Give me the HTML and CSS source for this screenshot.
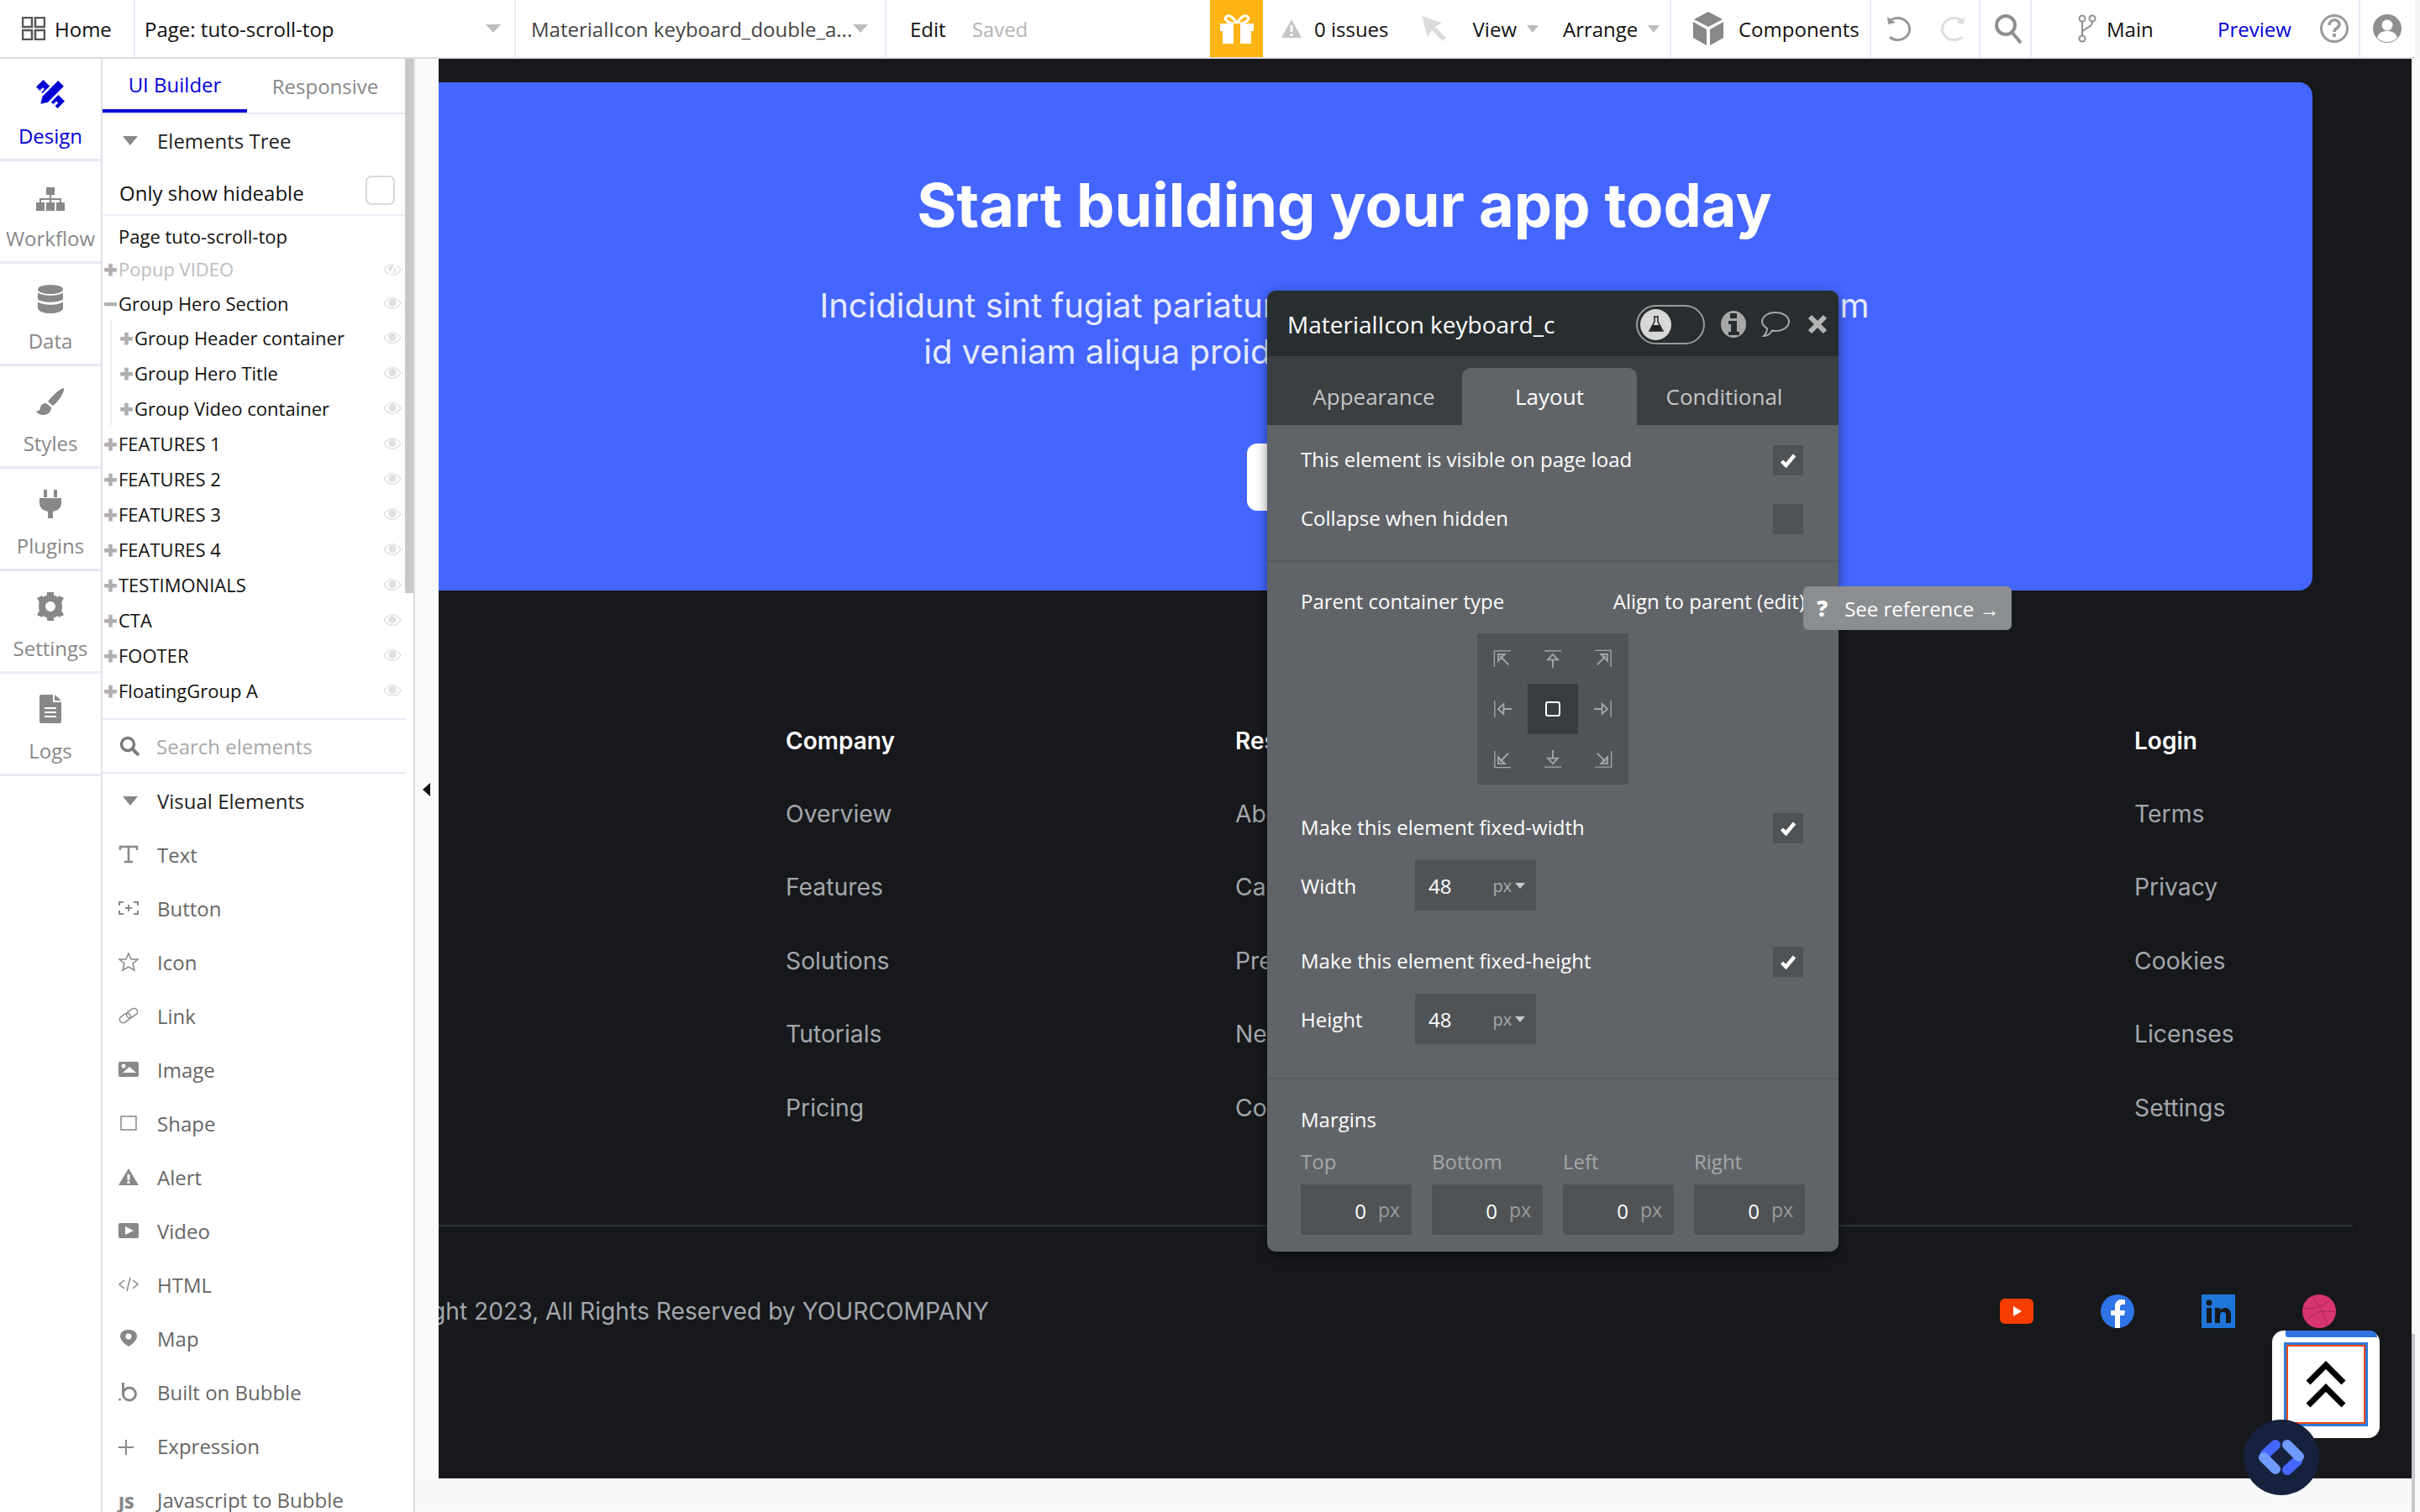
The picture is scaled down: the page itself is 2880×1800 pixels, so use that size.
FILE: index.html
```html
<!DOCTYPE html>
<html>
<head>
<meta charset="utf-8">
<title>tuto-scroll-top</title>
<link rel="stylesheet" href="styles.css">
</head>
<body>
<svg class="defs" width="0" height="0">
	<symbol id="eye" viewBox="0 0 24 16"><path d="M1 8C5 2.500 8.500 1 12 1s7 1.500 11 7c-4 5.500-7.500 7-11 7S5 13.500 1 8z" fill="none" stroke="currentColor" stroke-width="1.500"/><circle cx="12" cy="7.500" r="5" fill="currentColor"/></symbol>
	<symbol id="eye-off" viewBox="0 0 24 16"><path d="M1 8C5 2.500 8.500 1 12 1s7 1.500 11 7c-4 5.500-7.500 7-11 7S5 13.500 1 8z" fill="none" stroke="currentColor" stroke-width="1.500"/><circle cx="12" cy="7.500" r="5" fill="currentColor"/><path d="M8 16L17 0" stroke="#fff" stroke-width="3"/></symbol>
	<symbol id="corner" viewBox="0 0 24 24"><path d="M1.500 23V2H23" fill="none" stroke="currentColor" stroke-width="1.500"/><path d="M20 20L9 9" fill="none" stroke="currentColor" stroke-width="2"/><path d="M6.500 15V6.500H15z" fill="none" stroke="currentColor" stroke-width="2"/></symbol>
	<symbol id="edge" viewBox="0 0 24 24"><path d="M1 2H23" fill="none" stroke="currentColor" stroke-width="1.500"/><path d="M12 24V13M5.500 13.500L12 6.500l6.500 7z" fill="none" stroke="currentColor" stroke-width="2"/></symbol>
	<symbol id="check" viewBox="0 0 20 18"><path d="M2.500 10l5 5L17.500 3" fill="none" stroke="currentColor" stroke-width="4.500"/></symbol>
</svg>
<div class="app">
	<div class="topbar">
		<div class="seg seg-home">
			<svg class="ico-grid" viewBox="0 0 28 28"><path d="M1 1h11v11H1zM16 1h11v11H16zM1 16h11v11H1zM16 16h11v11H16z" fill="none" stroke="#555" stroke-width="2.500"/></svg>
			<span>Home</span>
		</div>
		<div class="seg seg-page"><span>Page: tuto-scroll-top</span><i class="caret"></i></div>
		<div class="seg seg-elem"><span>MaterialIcon keyboard_double_a...</span><i class="caret"></i></div>
		<div class="seg seg-edit"><span>Edit</span><span class="saved">Saved</span></div>
		<div class="gift">
			<svg viewBox="0 0 42 38" width="42" height="38"><path d="M21 13C17 5 11 2 8 5c-2 3 1 8 13 8zm0 0c4-8 10-11 13-8 2 3-1 8-13 8z" fill="none" stroke="#fff" stroke-width="3"/><path d="M1 13h40v9h-3v15H4V22H1z" fill="#fff"/><path d="M17 13h8v24h-8z" fill="#fdb515"/></svg>
		</div>
		<div class="seg seg-tools">
			<svg class="ico-warn" viewBox="0 0 26 24"><path d="M13 1l12 22H1z" fill="#c6c6c6"/><path d="M11.500 8h3v8h-3zM11.500 18h3v3h-3z" fill="#fff"/></svg>
			<span class="issues">0 issues</span>
			<svg class="ico-cursor" viewBox="0 0 30 30"><path d="M0 0l24 8-8 5 13 13-4 4-13-13-5 8z" fill="#dcdcdc"/></svg>
			<span class="view">View</span><i class="caret small"></i>
			<span class="arrange">Arrange</span><i class="caret small"></i>
		</div>
		<div class="seg seg-comp">
			<svg class="ico-cube" viewBox="0 0 36 40"><path d="M18 0l17 9-17 9L1 9z" fill="#888"/><path d="M0 12l16 9v19L0 31zM36 12l-16 9v19l16-9z" fill="#888"/></svg>
			<span>Components</span>
		</div>
		<div class="seg seg-undo">
			<svg viewBox="0 0 32 32" width="32" height="32"><path d="M5 8a14 13 0 1 1 1 18" fill="none" stroke="#9a9a9a" stroke-width="3"/><path d="M3 2l1 9 9-2z" fill="#9a9a9a"/></svg>
			<svg viewBox="0 0 32 32" width="32" height="32"><path d="M27 8a14 13 0 1 0-1 18" fill="none" stroke="#dedede" stroke-width="3"/><path d="M29 2l-1 9-9-2z" fill="#dedede"/></svg>
		</div>
		<div class="seg seg-find">
			<svg viewBox="0 0 34 36" width="34" height="36"><circle cx="14" cy="14" r="11" fill="none" stroke="#8f8f8f" stroke-width="4"/><path d="M21 22l11 13" stroke="#8f8f8f" stroke-width="4"/></svg>
		</div>
		<div class="seg seg-branch">
			<svg viewBox="0 0 22 34" width="22" height="34"><circle cx="5" cy="5" r="3.500" fill="none" stroke="#8f8f8f" stroke-width="2"/><circle cx="17" cy="5" r="3.500" fill="none" stroke="#8f8f8f" stroke-width="2"/><circle cx="5" cy="29" r="3.500" fill="none" stroke="#8f8f8f" stroke-width="2"/><path d="M5 9v16M17 9c0 8-12 7-12 13" fill="none" stroke="#8f8f8f" stroke-width="2"/></svg>
			<span>Main</span>
		</div>
		<div class="seg seg-preview">
			<span class="preview">Preview</span>
			<svg viewBox="0 0 34 34" width="34" height="34"><circle cx="17" cy="17" r="15.500" fill="none" stroke="#9a9a9a" stroke-width="3"/><path d="M11 13c0-8 12-8 12-1 0 5-6 4-6 9" fill="none" stroke="#9a9a9a" stroke-width="3.500"/><path d="M15 23h4v4h-4z" fill="#9a9a9a"/></svg>
		</div>
		<div class="seg seg-user">
			<svg viewBox="0 0 34 34" width="34" height="34"><circle cx="17" cy="17" r="17" fill="#8f8f8f"/><circle cx="17" cy="13" r="6.500" fill="#fff"/><path d="M5 28c2-7 7-8 12-8s10 1 12 8c-3 3-8 5-12 5s-9-2-12-5z" fill="#fff"/></svg>
		</div>
	</div>

	<div class="main">
		<nav class="rail">
			<div class="rail-item active">
				<svg viewBox="0 0 34 34" width="34" height="34">
					<g transform="rotate(-45 17 17)"><path d="M11 -1h12v36H11z" fill="#0000d6"/><path d="M11 5h5v3h-5zM11 13h5v3h-5zM11 21h5v3h-5zM11 28h5v3h-5z" fill="#fff"/></g>
					<g transform="rotate(45 17 17)"><path d="M11 0a2 2 0 0 1 2-2h8a2 2 0 0 1 2 2v26l-6 10-6-10z" fill="#0000d6" stroke="#fff" stroke-width="2.500"/></g>
				</svg>
				<span>Design</span>
			</div>
			<div class="rail-item">
				<svg viewBox="0 0 34 28" width="34" height="28"><path d="M12 0h10v9h-10zM0 18h10v10H0zM12 18h10v10H12zM24 18h10v10H24z" fill="#888"/><path d="M17 9v9M5 18v-4h24v4" fill="none" stroke="#888" stroke-width="2"/></svg>
				<span>Workflow</span>
			</div>
			<div class="rail-item">
				<svg viewBox="0 0 30 34" width="30" height="34"><ellipse cx="15" cy="5.500" rx="15" ry="5.500" fill="#888"/><path d="M0 9c4 5 26 5 30 0v8c-4 5-26 5-30 0zM0 20c4 5 26 5 30 0v8c-2 8-28 8-30 0z" fill="#888"/></svg>
				<span>Data</span>
			</div>
			<div class="rail-item">
				<svg viewBox="0 0 34 34" width="34" height="34"><path d="M33 1c1 4-5 15-13 21l-6-5C20 9 29 1 33 1zM12 19l6 5c0 5-4 9-9 9-4 0-8-2-9-5 4 1 5-2 5-4 1-4 4-5 7-5z" fill="#888"/></svg>
				<span>Styles</span>
			</div>
			<div class="rail-item">
				<svg viewBox="0 0 26 34" width="26" height="34"><path d="M5 0h4v9H5zM17 0h4v9h-4zM0 10h26v6c0 6-5 9-10 10v8h-6v-8C5 25 0 22 0 16z" fill="#888"/></svg>
				<span>Plugins</span>
			</div>
			<div class="rail-item">
				<svg viewBox="0 0 34 34" width="34" height="34"><circle cx="17" cy="17" r="10" fill="none" stroke="#888" stroke-width="8"/><path d="M13 0h8v7h-8zM13 27h8v7h-8zM1 7l6-3 4 6-6 4zM33 7l-6-3-4 6 6 4zM1 27l6 3 4-6-6-4zM33 27l-6 3-4-6 6-4z" fill="#888"/></svg>
				<span>Settings</span>
			</div>
			<div class="rail-item">
				<svg viewBox="0 0 26 34" width="26" height="34"><path d="M0 2a2 2 0 0 1 2-2h14v9h10v23a2 2 0 0 1-2 2H2a2 2 0 0 1-2-2zM18 0l8 7h-8z" fill="#888"/><path d="M6 16h14M6 21h14M6 26h14" stroke="#fff" stroke-width="2"/></svg>
				<span>Logs</span>
			</div>
		</nav>

		<aside class="panel">
			<div class="tabs">
				<div class="tab on">UI Builder</div>
				<div class="tab">Responsive</div>
			</div>
			<div class="tree-head"><i class="caret"></i><span>Elements Tree</span></div>
			<div class="hideable"><span>Only show hideable</span><i class="box"></i></div>
			<div class="tree">
				<div class="node page">Page tuto-scroll-top</div>
				<div class="node dim short"><b>+</b><span>Popup VIDEO</span><svg class="eye"><use href="#eye-off"/></svg></div>
				<div class="node hero-node"><b>&minus;</b><span>Group Hero Section</span><svg class="eye"><use href="#eye"/></svg></div>
				<div class="node sub"><b>+</b><span>Group Header container</span><svg class="eye"><use href="#eye"/></svg></div>
				<div class="node sub"><b>+</b><span>Group Hero Title</span><svg class="eye"><use href="#eye"/></svg></div>
				<div class="node sub"><b>+</b><span>Group Video container</span><svg class="eye"><use href="#eye"/></svg></div>
				<div class="node"><b>+</b><span>FEATURES 1</span><svg class="eye"><use href="#eye"/></svg></div>
				<div class="node"><b>+</b><span>FEATURES 2</span><svg class="eye"><use href="#eye"/></svg></div>
				<div class="node"><b>+</b><span>FEATURES 3</span><svg class="eye"><use href="#eye"/></svg></div>
				<div class="node"><b>+</b><span>FEATURES 4</span><svg class="eye"><use href="#eye"/></svg></div>
				<div class="node"><b>+</b><span>TESTIMONIALS</span><svg class="eye"><use href="#eye"/></svg></div>
				<div class="node"><b>+</b><span>CTA</span><svg class="eye"><use href="#eye"/></svg></div>
				<div class="node"><b>+</b><span>FOOTER</span><svg class="eye"><use href="#eye"/></svg></div>
				<div class="node"><b>+</b><span>FloatingGroup A</span><svg class="eye"><use href="#eye"/></svg></div>
			</div>
			<div class="search">
				<svg viewBox="0 0 24 24" width="24" height="24"><circle cx="10" cy="10" r="7.500" fill="none" stroke="#7c7c7c" stroke-width="3.500"/><path d="M15 15l8 8" stroke="#7c7c7c" stroke-width="4"/></svg>
				<span>Search elements</span>
			</div>
			<div class="vis-head"><i class="caret"></i><span>Visual Elements</span></div>
			<div class="vis"><svg viewBox="0 0 24 24"><path d="M2 7V3h20v4M12 3v18M7 21h10" fill="none" stroke="#888" stroke-width="2.500"/></svg><span>Text</span></div>
			<div class="vis"><svg viewBox="0 0 24 24"><path d="M6 5H1v4M18 5h5v4M6 19H1v-4M18 19h5v-4M12 8v8M8 12h8" fill="none" stroke="#888" stroke-width="2"/></svg><span>Button</span></div>
			<div class="vis"><svg viewBox="0 0 24 24"><path d="M12 2l3 7h8l-6 5 2 8-7-4-7 4 2-8-6-5h8z" fill="none" stroke="#888" stroke-width="1.500"/></svg><span>Icon</span></div>
			<div class="vis"><svg viewBox="0 0 24 24"><g transform="rotate(-35 12 12)" fill="none" stroke="#888" stroke-width="1.500"><rect x="0" y="8" width="14" height="8" rx="4"/><rect x="10" y="8" width="14" height="8" rx="4"/></g></svg><span>Link</span></div>
			<div class="vis"><svg viewBox="0 0 24 24"><path d="M2 3h20a2 2 0 0 1 2 2v14a2 2 0 0 1-2 2H2a2 2 0 0 1-2-2V5a2 2 0 0 1 2-2z" fill="#888"/><circle cx="6" cy="8" r="2.500" fill="#fff"/><path d="M5 16l8-7 8 7z" fill="#fff"/></svg><span>Image</span></div>
			<div class="vis"><svg viewBox="0 0 24 24"><path d="M3 4h18v16H3z" fill="none" stroke="#888" stroke-width="1.500"/></svg><span>Shape</span></div>
			<div class="vis"><svg viewBox="0 0 24 24"><path d="M12 2l12 20H0z" fill="#888"/><path d="M10.500 9h3v7h-3zM10.500 17h3v3h-3z" fill="#fff"/></svg><span>Alert</span></div>
			<div class="vis"><svg viewBox="0 0 24 24"><path d="M2 3h20a2 2 0 0 1 2 2v14a2 2 0 0 1-2 2H2a2 2 0 0 1-2-2V5a2 2 0 0 1 2-2z" fill="#888"/><path d="M8 7l10 5-10 5z" fill="#fff"/></svg><span>Video</span></div>
			<div class="vis"><svg viewBox="0 0 24 24"><path d="M7 7l-6 5 6 5M17 7l6 5-6 5M14 4l-4 16" fill="none" stroke="#888" stroke-width="1.500"/></svg><span>HTML</span></div>
			<div class="vis"><svg viewBox="0 0 24 24"><path d="M12 2c6 0 10 3 10 8 0 4-6 10-10 12C8 20 2 14 2 10c0-5 4-8 10-8z" fill="#888"/><circle cx="12" cy="10" r="3.500" fill="#fff"/></svg><span>Map</span></div>
			<div class="vis"><svg viewBox="0 0 24 24"><circle cx="1.500" cy="21" r="1.500" fill="#888"/><path d="M5.500 1v14" stroke="#888" stroke-width="3"/><circle cx="13" cy="14.500" r="7.500" fill="none" stroke="#888" stroke-width="3"/></svg><span>Built on Bubble</span></div>
			<div class="vis"><svg viewBox="0 0 24 24"><path d="M9 5v18M0 14h18" fill="none" stroke="#888" stroke-width="2"/></svg><span>Expression</span></div>
			<div class="vis"><em>JS</em><span>Javascript to Bubble</span></div>
			<div class="panel-thumb"></div>
		</aside>

		<div class="stage">
			<i class="collapse"></i>
			<div class="canvas">
				<section class="hero">
					<h1>Start building your app today</h1>
					<p>Incididunt sint fugiat pariatur cupidatat consectetur amet sit cillum<br>id veniam aliqua proident fugiat occaecat sit nostrud.</p>
					<a class="hero-btn">Get started</a>
				</section>
				<section class="links">
					<div class="col"><h4>Company</h4><a>Overview</a><a>Features</a><a>Solutions</a><a>Tutorials</a><a>Pricing</a></div>
					<div class="col"><h4>Resources</h4><a>About</a><a>Careers</a><a>Press</a><a>News</a><a>Contact</a></div>
					<div class="col"><h4>Social</h4><a>Twitter</a><a>LinkedIn</a><a>Facebook</a><a>GitHub</a><a>Dribbble</a></div>
					<div class="col"><h4>Login</h4><a>Terms</a><a>Privacy</a><a>Cookies</a><a>Licenses</a><a>Settings</a></div>
				</section>
				<section class="legal">
					<span class="copy">Copyright 2023, All Rights Reserved by YOURCOMPANY</span>
					<div class="socials">
						<svg viewBox="0 0 40 30" class="yt" width="40" height="30"><rect width="40" height="30" rx="6" fill="#f73c00"/><path d="M16 9l10 6-10 6z" fill="#fff"/></svg>
						<svg viewBox="0 0 40 40" width="40" height="40"><circle cx="20" cy="20" r="20" fill="#2e74e6"/><path d="M17 40V25h-5v-6h5v-5c0-5 3-8 8-8l4 .500V12h-3c-2 0-3 1-3 3v4h6l-1 6h-5v15z" fill="#fff"/></svg>
						<svg viewBox="0 0 40 40" width="40" height="40"><rect width="40" height="40" fill="#1f76d8"/><circle cx="9" cy="10" r="3.500" fill="#16181b"/><path d="M6 16h6v18H6zM16 16h6v3c3-5 13-4 13 4v11h-6V24c0-4-7-5-7 1v9h-6z" fill="#16181b"/></svg>
						<svg viewBox="0 0 40 40" width="40" height="40"><circle cx="20" cy="20" r="20" fill="#d83570"/><path d="M12 3c7 8 14 18 18 34M1 17c12 1 26-3 32-11M5 32c6-9 18-15 34-11" fill="none" stroke="#a82656" stroke-width="1"/></svg>
					</div>
				</section>
			</div>
			<div class="strip"></div>
		</div>
	</div>

	<div class="editor">
		<div class="ed-head">
			<span class="ed-name">MaterialIcon keyboard_c</span>
			<div class="toggle"><i class="knob"><svg viewBox="0 0 20 20" width="20" height="20"><path d="M7 1h6M8 1v6l-6 11h16L12 7V1" fill="none" stroke="#222" stroke-width="1.500"/><path d="M6 11h8l3 7H3z" fill="#222"/></svg></i></div>
			<svg viewBox="0 0 30 32" width="30" height="32"><ellipse cx="15" cy="16" rx="15" ry="16" fill="#a8a8a8"/><path d="M11 3h8v6h-8zM9 12h10v13h3v4H9v-4h3v-9H9z" fill="#282e30"/></svg>
			<svg viewBox="0 0 36 32" width="36" height="32"><path d="M18 2c9 0 16 5 16 11s-7 11-16 11c-2 0-3 0-4-.500C12 27 8 30 4 30c3-3 4-5 4-9-3-2-6-5-6-8C2 7 9 2 18 2z" fill="none" stroke="#a8a8a8" stroke-width="2"/></svg>
			<svg viewBox="0 0 24 24" width="24" height="24"><path d="M3 3l18 18M21 3L3 21" stroke="#b4b4b4" stroke-width="6"/></svg>
		</div>
		<div class="ed-tabs">
			<div class="ed-tab first">Appearance</div>
			<div class="ed-tab on">Layout</div>
			<div class="ed-tab last">Conditional</div>
		</div>
		<div class="ed-sec sec-visible">
			<div class="ed-row"><span>This element is visible on page load</span><i class="chk"><svg><use href="#check"/></svg></i></div>
			<div class="ed-row"><span>Collapse when hidden</span><i class="chk"></i></div>
		</div>
		<div class="ed-sec sec-size">
			<div class="ed-row parent"><span>Parent container type</span><span>Align to parent (edit)</span></div>
			<div class="align">
				<i><svg><use href="#corner"/></svg></i>
				<i><svg><use href="#edge"/></svg></i>
				<i><svg class="r90"><use href="#corner"/></svg></i>
				<i><svg class="r270"><use href="#edge"/></svg></i>
				<i class="cur"><b></b></i>
				<i><svg class="r90"><use href="#edge"/></svg></i>
				<i><svg class="r270"><use href="#corner"/></svg></i>
				<i><svg class="r180"><use href="#edge"/></svg></i>
				<i><svg class="r180"><use href="#corner"/></svg></i>
			</div>
			<div class="ed-row fixed"><span>Make this element fixed-width</span><i class="chk"><svg><use href="#check"/></svg></i></div>
			<div class="dim-row"><span class="dim-label">Width</span><div class="num"><span>48</span><small>px</small><i class="tri"></i></div></div>
			<div class="ed-row fixed fixed2"><span>Make this element fixed-height</span><i class="chk"><svg><use href="#check"/></svg></i></div>
			<div class="dim-row"><span class="dim-label">Height</span><div class="num"><span>48</span><small>px</small><i class="tri"></i></div></div>
		</div>
		<div class="ed-sec sec-margin">
			<div class="m-title">Margins</div>
			<div class="m-grid">
				<div class="m-cell"><label>Top</label><div class="m-input"><span>0</span><small>px</small></div></div>
				<div class="m-cell"><label>Bottom</label><div class="m-input"><span>0</span><small>px</small></div></div>
				<div class="m-cell"><label>Left</label><div class="m-input"><span>0</span><small>px</small></div></div>
				<div class="m-cell"><label>Right</label><div class="m-input"><span>0</span><small>px</small></div></div>
			</div>
		</div>
	</div>

	<div class="tip"><b>?</b><span>See reference &rarr;</span></div>

	<div class="scroll-btn">
		<div class="scroll-top"></div>
		<div class="scroll-outline">
			<div class="scroll-inner">
				<svg viewBox="0 0 48 56" width="48" height="56"><path d="M3 26L24 5l21 21M3 53l21-21 21 21" fill="none" stroke="#000" stroke-width="7"/></svg>
			</div>
		</div>
	</div>
	<div class="badge">
		<svg viewBox="0 0 60 44" width="60" height="44" fill="none" stroke-linecap="round" stroke-width="12">
			<path d="M23 7L11 18M49 26L37 37" stroke="#4466ff"/>
			<path d="M9 22L23 36M37 7L51 21" stroke="#6f9bff"/>
		</svg>
	</div>
	<i class="page-scroll"></i>
</div>
</body>
</html>
```
FILE: styles.css
```css
* {box-sizing: border-box;}
html, body {margin: 0; padding: 0;}
body {
	background: #f5f5f8;
	font-family: "Open Sans", sans-serif;
	color: #111;
}
i, em {font-style: normal;}
.defs {position: absolute;}

.app {
	width: 2880px;
	height: 1800px;
	position: relative;
	overflow: hidden;
}

/* top bar */
.topbar {
	width: 2874px;
	height: 70px;
	display: flex;
	background: #fff;
	border-bottom: 2px solid #ddd;
	font-size: 24px;
}
.seg {
	display: flex;
	align-items: center;
	flex: none;
	border-right: 2px solid #e8eaf6;
}
.caret {
	display: block;
	width: 0;
	height: 0;
	border-left: 9px solid transparent;
	border-right: 9px solid transparent;
	border-top: 10px solid #bdbdbd;
}
.caret.small {
	border-left-width: 7px;
	border-right-width: 7px;
	border-top-width: 9px;
}
.seg-home {width: 161px; padding-left: 26px; gap: 11px;}
.ico-grid {width: 28px; height: 28px;}
.seg-page {width: 453px; padding: 0 16px 0 11px; justify-content: space-between;}
.seg-elem {width: 441px; padding: 0 20px 0 18px; justify-content: space-between; color: #444;}
.seg-edit {width: 385px; padding-left: 28px; gap: 31px; border-right: none;}
.saved {color: #b4b4b4;}
.gift {
	width: 63px;
	flex: none;
	background: #fdb515;
	display: flex;
	align-items: center;
	justify-content: center;
}
.seg-tools {width: 486px; padding-left: 21px;}
.ico-warn {width: 26px; height: 24px;}
.issues {margin-left: 14px;}
.ico-cursor {width: 30px; height: 30px; margin-left: 39px;}
.view {margin-left: 31px;}
.seg-tools .caret {margin-left: 12px;}
.arrange {margin-left: 29px;}
.seg-comp {width: 238px; padding-left: 26px; gap: 18px;}
.ico-cube {width: 36px; height: 40px;}
.seg-undo {width: 130px; padding-left: 16px; gap: 34px;}
.seg-find {width: 61px; padding-left: 16px;}
.seg-branch {width: 197px; padding-left: 55px; gap: 12px; border-right: none;}
.seg-preview {width: 194px; padding-left: 24px; gap: 34px;}
.preview {color: #0000d6;}
.seg-user {width: 65px; padding-left: 15px; border-right: none;}

/* main area */
.main {
	display: flex;
	height: 1730px;
}
.rail {
	width: 122px;
	flex: none;
	background: #fff;
	border-right: 2px solid #e2e2e8;
}
.rail-item {
	height: 122px;
	display: flex;
	flex-direction: column;
	align-items: center;
	justify-content: flex-end;
	padding-bottom: 10px;
	border-bottom: 3px solid #e6e9f6;
	color: #888;
	font-size: 24px;
	gap: 16px;
}
.rail-item svg {display: block;}
.rail-item span {line-height: 34px;}
.rail-item.active {color: #0000d6;}

.panel {
	width: 372px;
	flex: none;
	background: #fff;
	border-right: 2px solid #ddd;
	position: relative;
	overflow: hidden;
	font-size: 22px;
}
.panel-thumb {
	position: absolute;
	top: 0;
	right: 0;
	width: 10px;
	height: 636px;
	background: #c8c8c8;
}
.tabs {
	display: flex;
	width: 360px;
	height: 66px;
	border-bottom: 2px solid #e6e9f6;
}
.tab {
	width: 172px;
	height: 64px;
	display: flex;
	align-items: center;
	justify-content: center;
	color: #888;
	font-size: 24px;
}
.tab + .tab {width: 186px;}
.tab.on {color: #0000d6; border-bottom: 4px solid #0000d6; height: 64px;}
.tree-head, .vis-head {
	display: flex;
	align-items: center;
	height: 64px;
	padding-left: 24px;
	gap: 23px;
	font-size: 24px;
	color: #222;
}
.tree-head {padding-bottom: 2px;}
.tree-head .caret, .vis-head .caret {
	border-left-width: 9px;
	border-right-width: 9px;
	border-top-width: 11px;
	border-top-color: #888;
}
.hideable {
	display: flex;
	align-items: center;
	justify-content: space-between;
	width: 360px;
	height: 57px;
	padding: 3px 12px 0 20px;
	border-bottom: 2px solid #eef0f8;
	font-size: 24px;
}
.box {
	width: 35px;
	height: 35px;
	border: 2px solid #d8d8dc;
	border-radius: 7px;
	margin-top: -5px;
}
.tree {width: 360px; padding-top: 5px;}
.node {
	height: 42px;
	display: flex;
	align-items: center;
	color: #111;
	position: relative;
}
.node b {
	width: 19px;
	flex: none;
	color: #b0b0b0;
	font-size: 28px;
	font-weight: 800;
	text-align: center;
	-webkit-text-stroke: .8px #b0b0b0;
}
.node .eye {
	position: absolute;
	right: 4px;
	top: 13px;
	width: 22px;
	height: 16px;
	color: #e0e0e0;
}
.node.page {height: 38px; padding-left: 19px;}
.node.dim span {color: #bdbdbd;}
.node.short {height: 40px;}
.node.hero-node {height: 41px;}
.node.sub {padding-left: 19px;}
.node.sub::before {
	content: "";
	position: absolute;
	left: 9px;
	top: 0;
	bottom: 0;
	width: 2px;
	background: #f0f0f0;
}
.search {
	width: 360px;
	height: 66px;
	margin-top: 12px;
	display: flex;
	align-items: center;
	padding-left: 20px;
	gap: 20px;
	border-top: 2px solid #e6e9f6;
	border-bottom: 2px solid #e6e9f6;
	color: #a8a8a8;
	font-size: 24px;
}
.vis {
	height: 64px;
	display: flex;
	align-items: center;
	padding-left: 19px;
	gap: 22px;
	color: #666;
	font-size: 24px;
}
.vis svg {width: 24px; height: 24px; flex: none;}
.vis em {
	width: 24px;
	font-weight: 800;
	font-size: 20px;
	color: #888;
	padding-top: 6px;
}

/* canvas */
.stage {
	width: 2386px;
	flex: none;
	padding-left: 28px;
	background: #fafafa;
	position: relative;
}
.collapse {
	position: absolute;
	left: 9px;
	top: 862px;
	width: 0;
	height: 0;
	border-top: 8px solid transparent;
	border-bottom: 8px solid transparent;
	border-right: 9px solid #111;
}
.canvas {
	width: 2348px;
	height: 1690px;
	padding-top: 28px;
	background: #16181b;
	overflow: hidden;
	font-family: Inter, sans-serif;
}
.strip {
	height: 32px;
	margin-left: -28px;
	width: 2380px;
	background: #f8f8f9;
}
.hero {
	width: 2230px;
	height: 605px;
	background: #4466ff;
	border-radius: 0 16px 16px 0;
	padding: 103px 74px 0 0;
	color: #fff;
	display: flex;
	flex-direction: column;
	align-items: center;
}
.hero h1 {
	margin: 0;
	font-size: 72px;
	line-height: 86px;
	font-weight: 700;
	white-space: nowrap;
}
.hero p {
	margin: 49px 0 0;
	font-size: 40px;
	line-height: 55px;
	text-align: center;
	white-space: nowrap;
	color: #e6eaff;
}
.hero-btn {
	display: block;
	width: 232px;
	height: 80px;
	margin-top: 82px;
	background: #fff;
	border-radius: 12px;
	color: #4466ff;
	font-size: 28px;
	line-height: 80px;
	text-align: center;
}
.links {
	display: grid;
	grid-template-columns: repeat(4, 535px);
	padding: 162px 0 0 413px;
}
.col h4 {
	margin: 0 0 26px;
	font-size: 28px;
	line-height: 34px;
	font-weight: 600;
	color: #fff;
}
.col a {
	display: flex;
	align-items: center;
	height: 87.5px;
	font-size: 28.3px;
	color: #a3a7ad;
}
.legal {
	margin: 95px 70px 0 0;
	height: 204px;
	border-top: 2px solid #2f3236;
	display: flex;
	align-items: center;
	justify-content: space-between;
	padding-right: 20px;
}
.copy {
	margin-left: -97px;
	font-size: 28.2px;
	color: #a3a7ad;
	white-space: nowrap;
}
.socials {
	display: flex;
	align-items: center;
	gap: 80px;
}

/* property editor */
.editor {
	position: absolute;
	left: 1508px;
	top: 346px;
	width: 680px;
	height: 1144px;
	background: #606468;
	border-radius: 10px;
	box-shadow: 0 4px 14px rgba(0, 0, 0, .45);
	color: #fff;
	font-size: 24px;
	overflow: hidden;
}
.ed-head {
	height: 78px;
	background: #282e30;
	display: flex;
	align-items: center;
	padding: 2px 0 0 24px;
}
.ed-name {
	width: 415px;
	font-size: 28px;
	white-space: nowrap;
}
.toggle {
	width: 82px;
	height: 47px;
	border: 2px solid #9a9a9a;
	border-radius: 24px;
	padding: 3px 0 0 3px;
	margin-right: 19px;
}
.knob {
	display: flex;
	align-items: center;
	justify-content: center;
	width: 37px;
	height: 37px;
	border-radius: 50%;
	background: #d8d8d8;
}
.ed-head > svg + svg {margin-left: 17px;}
.ed-head > svg + svg + svg {margin-left: 20px;}
.ed-tabs {
	height: 82px;
	padding-top: 14px;
	background: #3b3f42;
	display: flex;
}
.ed-tab {
	width: 232px;
	display: flex;
	align-items: center;
	justify-content: center;
	color: #c4c6c8;
	font-size: 26px;
}
.ed-tab.first {padding-left: 22px;}
.ed-tab.on {
	width: 208px;
	background: #606468;
	color: #fff;
	border-radius: 10px 10px 0 0;
}
.ed-tab.last {width: 240px; padding-right: 32px;}
.ed-sec {
	padding: 0 40px;
	border-bottom: 2px solid #565a5d;
}
.sec-visible {height: 163px; padding-top: 24px;}
.ed-row {
	height: 36px;
	display: flex;
	align-items: center;
	justify-content: space-between;
	padding-right: 2px;
}
.ed-row + .ed-row {margin-top: 34px;}
.ed-row > span {margin-top: -4px;}
.chk {
	display: flex;
	align-items: center;
	justify-content: center;
	width: 36px;
	height: 36px;
	background: #4f5356;
	color: #fff;
}
.chk svg {width: 20px; height: 18px;}
.sec-size {height: 616px; padding-top: 30px;}
.ed-row.parent {padding-right: 0;}
.align {
	display: grid;
	grid-template-columns: repeat(3, 60px);
	grid-template-rows: repeat(3, 60px);
	width: 180px;
	margin: 19px 0 0 210px;
	background: #505457;
}
.align i {
	display: flex;
	align-items: center;
	justify-content: center;
	color: #a4a6a8;
}
.align svg {width: 22px; height: 22px;}
.align .cur {background: #3a3d40;}
.align .cur b {
	width: 18px;
	height: 18px;
	border: 2px solid #fff;
	border-radius: 3px;
}
.r90 {transform: rotate(90deg);}
.r180 {transform: rotate(180deg);}
.r270 {transform: rotate(270deg);}
.ed-row.fixed {margin-top: 34px;}
.ed-row.fixed2 {margin-top: 43px;}
.dim-row {
	display: flex;
	align-items: center;
	margin-top: 20px;
}
.dim-label {width: 136px;}
.num {
	width: 144px;
	height: 60px;
	background: #4f5356;
	display: flex;
	align-items: center;
	padding-left: 16px;
}
.num small {
	margin-left: 49px;
	font-size: 20px;
	color: #a8aaac;
}
.tri {
	margin-left: 4px;
	border-left: 6px solid transparent;
	border-right: 6px solid transparent;
	border-top: 7px solid #c8c8c8;
}
.sec-margin {padding-top: 33px; border-bottom: none;}
.m-title {height: 30px; line-height: 30px;}
.m-grid {
	display: grid;
	grid-template-columns: repeat(4, 132px);
	column-gap: 24px;
	margin-top: 20px;
}
.m-cell label {
	display: block;
	height: 30px;
	line-height: 30px;
	color: #a5a8aa;
}
.m-input {
	height: 60px;
	margin-top: 12px;
	background: #4f5356;
	border-radius: 3px;
	display: flex;
	align-items: center;
	justify-content: flex-end;
	gap: 14px;
	padding-right: 14px;
}
.m-input span {padding-top: 2px;}
.m-input small {font-size: 23px; color: #999c9e;}

.tip {
	position: absolute;
	left: 2146px;
	top: 698px;
	width: 248px;
	height: 52px;
	background: #8b8e90;
	border-radius: 6px;
	display: flex;
	align-items: center;
	padding-left: 16px;
	color: #fff;
	font-size: 24px;
	gap: 20px;
}
.tip b {font-size: 26px; font-weight: 800;}

/* floating button on the canvas */
.scroll-btn {
	position: absolute;
	left: 2704px;
	top: 1584px;
	width: 128px;
	height: 128px;
	background: #fff;
	border-radius: 14px;
}
.scroll-top {
	position: absolute;
	left: 16px;
	top: 0;
	width: 109px;
	height: 8px;
	background: #3072e0;
	border-radius: 0 10px 0 4px;
}
.scroll-outline {
	position: absolute;
	left: 14px;
	top: 14px;
	width: 100px;
	height: 100px;
	border: 3px solid #2f78d8;
}
.scroll-inner {
	width: 100%;
	height: 100%;
	border: 2px solid #f04a12;
	display: flex;
	align-items: center;
	justify-content: center;
}
.badge {
	position: absolute;
	left: 2670px;
	top: 1690px;
	width: 90px;
	height: 90px;
	border-radius: 50%;
	background: #16213e;
	display: flex;
	align-items: center;
	justify-content: center;
}
.page-scroll {
	position: absolute;
	left: 2870px;
	top: 1588px;
	width: 4px;
	height: 212px;
	background: #c8c8cc;
}
```
